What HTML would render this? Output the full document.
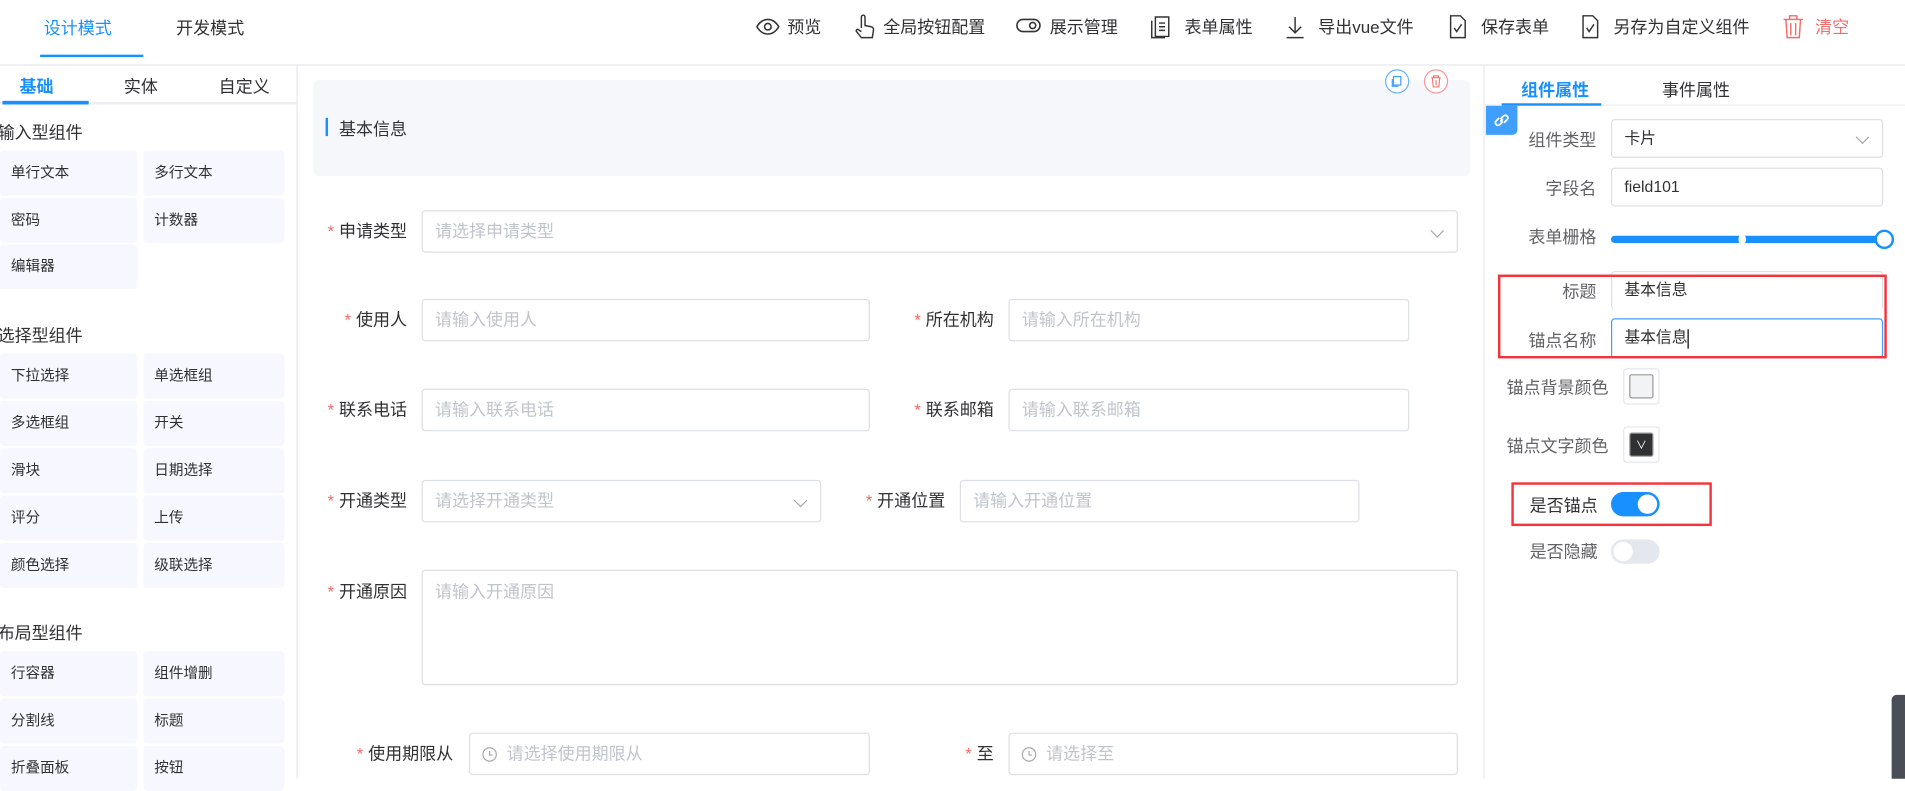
<!DOCTYPE html>
<html><head><meta charset="utf-8"><style>
*{box-sizing:border-box;margin:0;padding:0}
html,body{width:1905px;height:779px;overflow:hidden;background:#fff}
#w{position:absolute;left:0;top:0;width:1568px;height:641px;transform:scale(1.21492);transform-origin:0 0;font-family:"Liberation Sans","Noto Sans CJK SC",sans-serif;color:#303133;font-size:14px}
.a{position:absolute;white-space:nowrap}
.btn{position:absolute;background:#f6f7ff;border-radius:3px;font-size:12px;color:#303133;padding-left:9px;line-height:37px;height:37px}
.in{position:absolute;border:1px solid #dcdfe6;border-radius:3px;background:#fff;color:#c0c4cc;font-size:14px;padding-left:10px;line-height:33px;height:35px}
.lb{position:absolute;text-align:right;font-size:14px;color:#303133;line-height:35px}
.lb b{color:#f56c6c;font-weight:normal;margin-right:4px}
.arr{position:absolute;right:12px;top:12px;width:8px;height:8px;border-right:1px solid #aaa;border-bottom:1px solid #aaa;transform:rotate(45deg)}
.pl{position:absolute;width:90px;text-align:right;font-size:14px;color:#606266;left:1224px}
.pi{position:absolute;left:1326px;width:224px;height:32px;border:1px solid #dcdfe6;border-radius:3px;padding-left:10px;line-height:30px;font-size:13px;color:#303133}
.ti{position:absolute;top:12px;font-size:14px;color:#303133}
svg{position:absolute}
</style></head><body><div id="w">
<!-- top bar -->
<div class="a" style="left:0;top:53px;width:1568px;height:1px;background:#e4e7ed"></div>
<div class="a" style="left:36px;top:13px;color:#1890ff;font-size:14px">设计模式</div>
<div class="a" style="left:33px;top:45px;width:85px;height:2px;background:#1890ff"></div>
<div class="a" style="left:145px;top:13px;font-size:14px">开发模式</div>
<svg style="left:622px;top:14px" width="20" height="16" viewBox="0 0 20 16"><path d="M1 8C4 3 7 2 10 2s6 1 9 6c-3 5-6 6-9 6s-6-1-9-6z" fill="none" stroke="#333" stroke-width="1.3"/><circle cx="10" cy="8" r="2.7" fill="none" stroke="#333" stroke-width="1.3"/></svg>
<div class="ti" style="left:648px">预览</div>
<svg style="left:703px;top:11px" width="18" height="22" viewBox="0 0 18 22"><path d="M6 12V3a1.5 1.5 0 013 0v7l5 1c1.5.4 2 1.3 2 2.5L15 20H6l-4-5c-.7-1 .5-2.3 1.6-1.5L6 15" fill="none" stroke="#333" stroke-width="1.2"/></svg>
<div class="ti" style="left:727px">全局按钮配置</div>
<svg style="left:836px;top:14px" width="22" height="14" viewBox="0 0 22 14"><rect x="1" y="2" width="19" height="10" rx="5" fill="none" stroke="#333" stroke-width="1.3"/><circle cx="14" cy="7" r="2.5" fill="none" stroke="#333" stroke-width="1.3"/></svg>
<div class="ti" style="left:864px">展示管理</div>
<svg style="left:947px;top:12px" width="18" height="20" viewBox="0 0 18 20"><path d="M4 2h11v16H4zM1 5v14h11M7 7h5M7 10h5M7 13h5" fill="none" stroke="#333" stroke-width="1.2"/></svg>
<div class="ti" style="left:975px">表单属性</div>
<svg style="left:1058px;top:12px" width="16" height="20" viewBox="0 0 16 20"><path d="M8 2v13M3 10l5 5 5-5M1 19h14" fill="none" stroke="#333" stroke-width="1.2"/></svg>
<div class="ti" style="left:1085px">导出vue文件</div>
<svg style="left:1192px;top:11px" width="16" height="22" viewBox="0 0 16 22"><path d="M2 2h8l4 4v14H2zM5 12l2 3 4-6" fill="none" stroke="#333" stroke-width="1.2"/></svg>
<div class="ti" style="left:1219px">保存表单</div>
<svg style="left:1301px;top:11px" width="16" height="22" viewBox="0 0 16 22"><path d="M2 2h8l4 4v14H2zM5 12l2 3 4-6" fill="none" stroke="#333" stroke-width="1.2"/></svg>
<div class="ti" style="left:1328px">另存为自定义组件</div>
<svg style="left:1467px;top:11px" width="18" height="22" viewBox="0 0 18 22"><path d="M1 5h16M6 5V2h6v3M3 5l1 15h10l1-15M7 8v10M11 8v10" fill="none" stroke="#f56c6c" stroke-width="1.2"/></svg>
<div class="ti" style="left:1494px;color:#f56c6c">清空</div>
<!-- left panel -->
<div class="a" style="left:244px;top:54px;width:1px;height:587px;background:#e4e7ed"></div>
<div class="a" style="left:0;top:84px;width:244px;height:2px;background:#eceef2"></div>
<div class="a" style="left:16px;top:61px;font-size:14px;color:#1890ff;font-weight:bold">基础</div>
<div class="a" style="left:102px;top:61px;font-size:14px">实体</div>
<div class="a" style="left:180px;top:61px;font-size:14px">自定义</div>
<div class="a" style="left:2px;top:83px;width:71px;height:3px;background:#1890ff"></div>
<div class="a" style="left:-2px;top:99px;font-size:14px">输入型组件</div>
<div class="btn" style="left:0;top:124px;width:113px">单行文本</div><div class="btn" style="left:118px;top:124px;width:116px">多行文本</div>
<div class="btn" style="left:0;top:163px;width:113px">密码</div><div class="btn" style="left:118px;top:163px;width:116px">计数器</div>
<div class="btn" style="left:0;top:201px;width:113px">编辑器</div>
<div class="a" style="left:-2px;top:266px;font-size:14px">选择型组件</div>
<div class="btn" style="left:0;top:291px;width:113px">下拉选择</div><div class="btn" style="left:118px;top:291px;width:116px">单选框组</div>
<div class="btn" style="left:0;top:330px;width:113px">多选框组</div><div class="btn" style="left:118px;top:330px;width:116px">开关</div>
<div class="btn" style="left:0;top:369px;width:113px">滑块</div><div class="btn" style="left:118px;top:369px;width:116px">日期选择</div>
<div class="btn" style="left:0;top:408px;width:113px">评分</div><div class="btn" style="left:118px;top:408px;width:116px">上传</div>
<div class="btn" style="left:0;top:447px;width:113px">颜色选择</div><div class="btn" style="left:118px;top:447px;width:116px">级联选择</div>
<div class="a" style="left:-2px;top:511px;font-size:14px">布局型组件</div>
<div class="btn" style="left:0;top:536px;width:113px">行容器</div><div class="btn" style="left:118px;top:536px;width:116px">组件增删</div>
<div class="btn" style="left:0;top:575px;width:113px">分割线</div><div class="btn" style="left:118px;top:575px;width:116px">标题</div>
<div class="btn" style="left:0;top:614px;width:113px">折叠面板</div><div class="btn" style="left:118px;top:614px;width:116px">按钮</div>
<!-- center -->
<div class="a" style="left:258px;top:66px;width:952px;height:79px;background:#f6f7fb;border-radius:5px"></div>
<div class="a" style="left:268px;top:97px;width:2px;height:15px;background:#1890ff"></div>
<div class="a" style="left:279px;top:96px;font-size:14px">基本信息</div>
<svg style="left:1139px;top:56px" width="60" height="24" viewBox="0 0 60 24"><circle cx="11" cy="11" r="9.5" fill="#fff" stroke="#69b1ff"/><rect x="8" y="7" width="6" height="7" fill="none" stroke="#409eff"/><path d="M7 9v6h5" fill="none" stroke="#409eff"/><circle cx="43" cy="11" r="9.5" fill="#fff" stroke="#f89898"/><path d="M39 8h8M41 8V6.5h4V8M40 8.5l.7 7h4.6l.7-7M43 10v4" fill="none" stroke="#f56c6c" stroke-width=".9"/></svg>
<div class="lb" style="left:250px;top:173px;width:85px"><b>*</b>申请类型</div>
<div class="in" style="left:347px;top:173px;width:853px">请选择申请类型<i class="arr"></i></div>
<div class="lb" style="left:250px;top:246px;width:85px"><b>*</b>使用人</div>
<div class="in" style="left:347px;top:246px;width:369px">请输入使用人</div>
<div class="lb" style="left:730px;top:246px;width:88px"><b>*</b>所在机构</div>
<div class="in" style="left:830px;top:246px;width:330px">请输入所在机构</div>
<div class="lb" style="left:250px;top:320px;width:85px"><b>*</b>联系电话</div>
<div class="in" style="left:347px;top:320px;width:369px">请输入联系电话</div>
<div class="lb" style="left:730px;top:320px;width:88px"><b>*</b>联系邮箱</div>
<div class="in" style="left:830px;top:320px;width:330px">请输入联系邮箱</div>
<div class="lb" style="left:250px;top:395px;width:85px"><b>*</b>开通类型</div>
<div class="in" style="left:347px;top:395px;width:329px">请选择开通类型<i class="arr"></i></div>
<div class="lb" style="left:690px;top:395px;width:88px"><b>*</b>开通位置</div>
<div class="in" style="left:790px;top:395px;width:329px">请输入开通位置</div>
<div class="lb" style="left:250px;top:470px;width:85px;line-height:35px"><b>*</b>开通原因</div>
<div class="in" style="left:347px;top:469px;width:853px;height:95px;line-height:34px">请输入开通原因</div>
<div class="lb" style="left:270px;top:603px;width:103px"><b>*</b>使用期限从</div>
<div class="in" style="left:386px;top:603px;width:330px;padding-left:30px">请选择使用期限从</div>
<div class="lb" style="left:760px;top:603px;width:58px"><b>*</b>至</div>
<div class="in" style="left:830px;top:603px;width:370px;padding-left:30px">请选择至</div>
<svg style="left:396px;top:614px" width="14" height="14" viewBox="0 0 14 14"><circle cx="7" cy="7" r="5.5" fill="none" stroke="#aaa"/><path d="M7 4v3.5h2.5" fill="none" stroke="#aaa"/></svg>
<svg style="left:840px;top:614px" width="14" height="14" viewBox="0 0 14 14"><circle cx="7" cy="7" r="5.5" fill="none" stroke="#aaa"/><path d="M7 4v3.5h2.5" fill="none" stroke="#aaa"/></svg>
<!-- right panel -->
<div class="a" style="left:1221px;top:54px;width:1px;height:587px;background:#e4e7ed"></div>
<div class="a" style="left:1222px;top:86px;width:346px;height:1px;background:#eceef2"></div>
<div class="a" style="left:1252px;top:64px;font-size:14px;color:#1890ff;font-weight:bold">组件属性</div>
<div class="a" style="left:1368px;top:64px;font-size:14px">事件属性</div>
<div class="a" style="left:1236px;top:85px;width:82px;height:2px;background:#1890ff"></div>
<div class="a" style="left:1223px;top:87px;width:26px;height:24px;background:#409eff;border-radius:0 0 4px 0"></div>
<svg style="left:1228px;top:91px" width="16" height="16" viewBox="0 0 16 16"><path d="M7 9l2-2M6 6l-2.5 2.5a2 2 0 003 3L9 9M10 10l2.5-2.5a2 2 0 00-3-3L7 7" fill="none" stroke="#fff" stroke-width="1.5"/></svg>
<div class="pl" style="top:105px">组件类型</div>
<div class="pi" style="top:98px">卡片<i class="arr" style="top:10px"></i></div>
<div class="pl" style="top:145px">字段名</div>
<div class="pi" style="top:138px">field101</div>
<div class="pl" style="top:185px">表单栅格</div>
<div class="a" style="left:1326px;top:194px;width:225px;height:6px;background:#1890ff;border-radius:3px"></div>
<div class="a" style="left:1431px;top:193px;width:6px;height:8px;background:#fff;border-radius:3px"></div>
<div class="a" style="left:1543px;top:189px;width:16px;height:16px;background:#fff;border:2px solid #1890ff;border-radius:50%"></div>
<div class="pi" style="top:223px;border-bottom:none">基本信息</div>
<div class="pl" style="top:230px">标题</div>
<div class="pi" style="top:262px;border-color:#409eff;height:33px">基本信息<span style="display:inline-block;width:1px;height:16px;background:#000;vertical-align:middle"></span></div>
<div class="pl" style="top:270px">锚点名称</div>
<div class="a" style="left:1233px;top:226px;width:320px;height:69px;border:2px solid #f5333a"></div>
<div class="a" style="left:1240px;top:309px;font-size:14px;color:#606266">锚点背景颜色</div>
<div class="a" style="left:1336px;top:303px;width:30px;height:30px;border:1px solid #e4e7ed;border-radius:3px;padding:4px"><div style="width:20px;height:20px;border:1px solid #999;border-radius:2px;background:#f2f3f5"></div></div>
<div class="a" style="left:1240px;top:357px;font-size:14px;color:#606266">锚点文字颜色</div>
<div class="a" style="left:1336px;top:351px;width:30px;height:30px;border:1px solid #e4e7ed;border-radius:3px;padding:4px"><div style="width:20px;height:20px;border:1px solid #999;border-radius:2px;background:#303133;color:#fff;font-size:9px;text-align:center;line-height:18px">∨</div></div>
<div class="a" style="left:1244px;top:397px;width:165px;height:36px;border:2px solid #f5333a"></div>
<div class="a" style="left:1259px;top:406px;font-size:14px">是否锚点</div>
<div class="a" style="left:1326px;top:405px;width:40px;height:20px;background:#1890ff;border-radius:10px"><div style="position:absolute;right:2px;top:2px;width:16px;height:16px;background:#fff;border-radius:50%"></div></div>
<div class="a" style="left:1259px;top:444px;font-size:14px;color:#606266">是否隐藏</div>
<div class="a" style="left:1326px;top:444px;width:40px;height:20px;background:#e4e7ed;border-radius:10px"><div style="position:absolute;left:2px;top:2px;width:16px;height:16px;background:#fff;border-radius:50%"></div></div>
<div class="a" style="left:1557px;top:572px;width:11px;height:69px;background:#4a4f57;border-radius:4px 0 0 0"></div>
</div></body></html>
